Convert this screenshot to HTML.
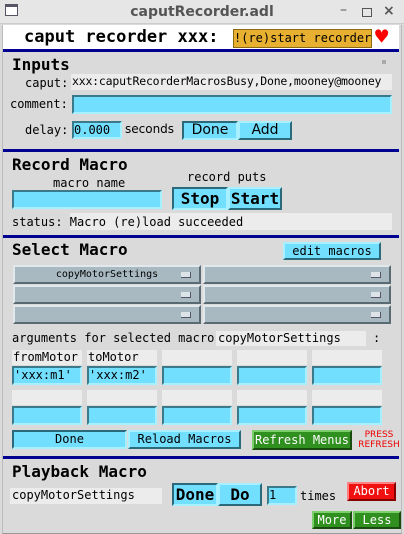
<!DOCTYPE html>
<html><head><meta charset="utf-8"><style>
*{margin:0;padding:0;box-sizing:border-box}
body{width:404px;height:534px;overflow:hidden;background:#dadada;font-family:"DejaVu Sans Mono","Liberation Mono",monospace;position:relative}
.a{position:absolute;white-space:nowrap}
.t{font-size:12px;color:#000;line-height:1}
.tb{font-family:"DejaVu Sans","Liberation Sans",sans-serif;}
.in{background:#73dfff;border:2px solid;border-color:#3a7a8a #a8f0ff #a8f0ff #3a7a8a}
.btn{background:#73dfff;border:2px solid;border-color:#a8f0ff #2a6a7a #2a6a7a #a8f0ff;text-align:center;font-size:13px}
.ro{background:#ececec}
.line{position:absolute;left:3px;width:396px;height:3px;background:#000090}
.h{font-family:"DejaVu Sans Mono",monospace;font-weight:bold;font-size:16px}
.menu{position:absolute;background:#a9b9c1;border:2px solid;border-color:#e0e8ec #5a6a72 #5a6a72 #e0e8ec;height:19px;font-size:10px;text-align:center;line-height:15px}
.menu i{position:absolute;right:8px;top:5px;width:10px;height:6px;background:#dde4e8;border-bottom:1px solid #556;border-right:1px solid #556}
.lab{position:absolute;background:#ececec;font-size:12px;line-height:15px;padding-left:1px}
.green{background:#2f8f1f;color:#fff;border:2px solid;border-color:#7acf6a #1a4a10 #1a4a10 #7acf6a;text-align:center;font-size:12px}
</style></head><body>
<div class="a" style="left:0;top:0;width:404px;height:24px;background:#e6e6e6;border-bottom:1px solid #ccc"></div>
<div class="a" style="left:5px;top:4px;width:13px;height:12px;border:1px solid #556;background:#fff;border-top:3px solid #556"></div>
<div class="a tb" style="left:0;width:404px;top:4px;text-align:center;font-size:14px;font-weight:bold;color:#555">caputRecorder.adl</div>
<div class="a tb" style="left:340px;top:2px;font-size:14px;color:#555">–</div>
<div class="a" style="left:362px;top:8px;width:10px;height:9px;border:1px solid #555"></div>
<div class="a tb" style="left:383px;top:3px;font-size:14px;color:#555;font-weight:bold">×</div>
<div class="a" style="left:2px;top:25px;width:400px;height:509px;border-left:1px solid #bbb;border-right:1px solid #bbb;border-bottom:1px solid #999"></div>
<div class="a" style="left:3px;top:25px;width:396px;height:25px;background:#fff"></div>
<div class="a" style="left:24px;top:26px;font-size:17px;font-weight:bold;line-height:22px">caput recorder xxx:</div>
<div class="a" style="left:233px;top:29px;width:139px;height:19px;background:#e8b030;border:1px solid #8a6a10;font-size:12px;line-height:17px;text-align:center">!(re)start recorder</div>
<div class="a" style="left:375px;top:26px;font-size:22px;color:#f00;line-height:24px">♥</div>
<div class="line" style="top:49px"></div>
<div class="a h" style="left:12px;top:55px">Inputs</div>
<div class="a" style="left:382px;top:60px;width:4px;height:4px;background:#aaa"></div>
<div class="a t" style="left:25px;top:77px">caput:</div>
<div class="a ro t" style="left:71px;top:74px;width:321px;height:16px;line-height:15px;overflow:hidden;padding-left:1px;font-size:11.5px;letter-spacing:-0.2px">xxx:caputRecorderMacrosBusy,Done,mooney@mooney</div>
<div class="a t" style="left:10px;top:98px">comment:</div>
<div class="a in" style="left:72px;top:95px;width:320px;height:19px"></div>
<div class="a t" style="left:25px;top:124px">delay:</div>
<div class="a in t" style="left:72px;top:121px;width:50px;height:18px;line-height:14px">0.000</div>
<div class="a tb" style="left:125px;top:122px;font-size:12px">seconds</div>
<div class="a btn tb" style="left:182px;top:121px;width:56px;height:19px;border-color:#2a6a7a #a8f0ff #a8f0ff #2a6a7a;font-size:14px;line-height:15px">Done</div>
<div class="a btn tb" style="left:238px;top:121px;width:54px;height:19px;font-size:14px;line-height:15px">Add</div>
<div class="line" style="top:149px"></div>
<div class="a h" style="left:12px;top:155px">Record Macro</div>
<div class="a t" style="left:53px;top:177px">macro name</div>
<div class="a t" style="left:187px;top:171px">record puts</div>
<div class="a in" style="left:12px;top:190px;width:150px;height:19px"></div>
<div class="a btn" style="left:172px;top:187px;width:56px;height:23px;border-color:#2a6a7a #a8f0ff #a8f0ff #2a6a7a;font-size:16px;font-weight:bold;line-height:19px">Stop</div>
<div class="a btn" style="left:228px;top:187px;width:54px;height:23px;font-size:16px;font-weight:bold;line-height:19px">Start</div>
<div class="a ro" style="left:70px;top:213px;width:322px;height:17px"></div>
<div class="a t" style="left:12px;top:216px">status: Macro (re)load succeeded</div>
<div class="line" style="top:235px"></div>
<div class="a h" style="left:12px;top:240px">Select Macro</div>
<div class="a btn" style="left:283px;top:242px;width:98px;height:18px;font-size:12px;line-height:14px">edit macros</div>
<div class="menu" style="left:13px;top:265px;width:188px">copyMotorSettings<i></i></div>
<div class="menu" style="left:203px;top:265px;width:188px"><i></i></div>
<div class="menu" style="left:13px;top:285px;width:188px"><i></i></div>
<div class="menu" style="left:203px;top:285px;width:188px"><i></i></div>
<div class="menu" style="left:13px;top:305px;width:188px"><i></i></div>
<div class="menu" style="left:203px;top:305px;width:188px"><i></i></div>
<div class="a ro" style="left:216px;top:331px;width:150px;height:15px"></div>
<div class="a t" style="left:12px;top:332px">arguments for selected macro</div>
<div class="a t" style="left:218px;top:332px">copyMotorSettings</div>
<div class="a t" style="left:373px;top:332px">:</div>
<div class="lab" style="left:12px;top:350px;width:70px;height:15px">fromMotor</div>
<div class="lab" style="left:87px;top:350px;width:70px;height:15px">toMotor</div>
<div class="lab" style="left:162px;top:350px;width:70px;height:15px"></div>
<div class="lab" style="left:237px;top:350px;width:70px;height:15px"></div>
<div class="lab" style="left:312px;top:350px;width:70px;height:15px"></div>
<div class="a in t" style="left:12px;top:366px;width:70px;height:19px;line-height:15px">'xxx:m1'</div>
<div class="a in t" style="left:87px;top:366px;width:70px;height:19px;line-height:15px">'xxx:m2'</div>
<div class="a in" style="left:162px;top:366px;width:70px;height:19px"></div>
<div class="a in" style="left:237px;top:366px;width:70px;height:19px"></div>
<div class="a in" style="left:312px;top:366px;width:70px;height:19px"></div>
<div class="lab" style="left:12px;top:390px;width:70px;height:15px"></div>
<div class="lab" style="left:87px;top:390px;width:70px;height:15px"></div>
<div class="lab" style="left:162px;top:390px;width:70px;height:15px"></div>
<div class="lab" style="left:237px;top:390px;width:70px;height:15px"></div>
<div class="lab" style="left:312px;top:390px;width:70px;height:15px"></div>
<div class="a in" style="left:12px;top:406px;width:70px;height:19px"></div>
<div class="a in" style="left:87px;top:406px;width:70px;height:19px"></div>
<div class="a in" style="left:162px;top:406px;width:70px;height:19px"></div>
<div class="a in" style="left:237px;top:406px;width:70px;height:19px"></div>
<div class="a in" style="left:312px;top:406px;width:70px;height:19px"></div>
<div class="a btn t" style="left:12px;top:430px;width:115px;height:19px;border-color:#2a6a7a #a8f0ff #a8f0ff #2a6a7a;font-size:12px;line-height:15px">Done</div>
<div class="a btn t" style="left:128px;top:430px;width:113px;height:19px;font-size:12px;line-height:15px">Reload Macros</div>
<div class="a green" style="left:252px;top:430px;width:100px;height:20px;line-height:16px">Refresh Menus</div>
<div class="a tb" style="left:357px;top:430px;font-size:9px;color:#e00;text-align:center;line-height:10px;width:44px">PRESS<br>REFRESH</div>
<div class="line" style="top:456px"></div>
<div class="a h" style="left:12px;top:462px">Playback Macro</div>
<div class="a ro t" style="left:10px;top:488px;width:152px;height:16px;line-height:15px;padding-left:2px">copyMotorSettings</div>
<div class="a btn" style="left:172px;top:483px;width:46px;height:23px;border-color:#2a6a7a #a8f0ff #a8f0ff #2a6a7a;font-size:16px;font-weight:bold;line-height:19px">Done</div>
<div class="a btn" style="left:218px;top:483px;width:44px;height:23px;font-size:16px;font-weight:bold;line-height:19px">Do</div>
<div class="a in t" style="left:267px;top:486px;width:30px;height:19px;line-height:15px">1</div>
<div class="a t" style="left:300px;top:490px">times</div>
<div class="a" style="left:347px;top:482px;width:49px;height:19px;background:#f01010;border:2px solid;border-color:#ff8080 #800 #800 #ff8080;color:#fff;font-size:12px;text-align:center;line-height:15px">Abort</div>
<div class="a green" style="left:312px;top:511px;width:40px;height:18px;line-height:14px">More</div>
<div class="a green" style="left:353px;top:511px;width:48px;height:18px;line-height:14px">Less</div>
</body></html>
